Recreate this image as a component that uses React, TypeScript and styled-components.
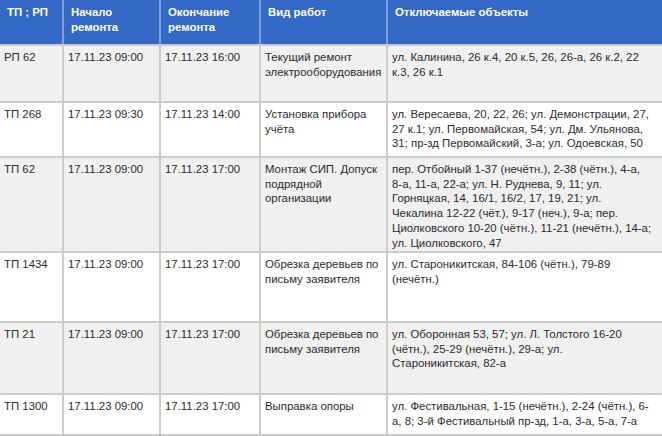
import React from 'react';
import styled, {createGlobalStyle} from "styled-components";

type RowType = {
    tp: string
    start: string
    end: string
    work: string
    objects: string
    height: number
}

const rows: RowType[] = [
    {tp: 'РП 62', start: '17.11.23 09:00', end: '17.11.23 16:00', work: 'Текущий ремонт электрооборудования', objects: 'ул. Калинина, 26 к.4, 20 к.5, 26, 26-а, 26 к.2, 22 к.3, 26 к.1', height: 57},
    {tp: 'ТП 268', start: '17.11.23 09:30', end: '17.11.23 14:00', work: 'Установка прибора учёта', objects: 'ул. Вересаева, 20, 22, 26; ул. Демонстрации, 27, 27 к.1; ул. Первомайская, 54; ул. Дм. Ульянова, 31; пр-зд Первомайский, 3-а; ул. Одоевская, 50', height: 55},
    {tp: 'ТП 62', start: '17.11.23 09:00', end: '17.11.23 17:00', work: 'Монтаж СИП. Допуск подрядной организации', objects: 'пер. Отбойный 1-37 (нечётн.), 2-38 (чётн.), 4-а, 8-а, 11-а, 22-а; ул. Н. Руднева, 9, 11; ул. Горняцкая, 14, 16/1, 16/2, 17, 19, 21; ул. Чекалина 12-22 (чёт.), 9-17 (неч.), 9-а; пер. Циолковского 10-20 (чётн.), 11-21 (нечётн.), 14-а; ул. Циолковского, 47', height: 95},
    {tp: 'ТП 1434', start: '17.11.23 09:00', end: '17.11.23 17:00', work: 'Обрезка деревьев по письму заявителя', objects: 'ул. Староникитская, 84-106 (чётн.), 79-89 (нечётн.)', height: 70},
    {tp: 'ТП 21', start: '17.11.23 09:00', end: '17.11.23 17:00', work: 'Обрезка деревьев по письму заявителя', objects: 'ул. Оборонная 53, 57; ул. Л. Толстого 16-20 (чётн.), 25-29 (нечётн.), 29-а; ул. Староникитская, 82-а', height: 72},
    {tp: 'ТП 1300', start: '17.11.23 09:00', end: '17.11.23 17:00', work: 'Выправка опоры', objects: 'ул. Фестивальная, 1-15 (нечётн.), 2-24 (чётн.), 6-а, 8; 3-й Фестивальный пр-зд, 1-а, 3-а, 5-а, 7-а', height: 41},
]

const App = () => {
    return (
        <>
            <GlobalStyle/>
            <Table>
                <colgroup>
                    <col style={{width: 63}}/>
                    <col style={{width: 97}}/>
                    <col style={{width: 100}}/>
                    <col style={{width: 127}}/>
                    <col style={{width: 275}}/>
                </colgroup>
                <thead>
                <HeadRow>
                    <Th>ТП ; РП</Th>
                    <Th>Начало ремонта</Th>
                    <Th>Окончание ремонта</Th>
                    <Th>Вид работ</Th>
                    <Th>Отключаемые объекты</Th>
                </HeadRow>
                </thead>
                <tbody>
                {rows.map((r, i) => (
                    <Row key={i} $odd={i % 2 === 0} $height={r.height}>
                        <Td>{r.tp}</Td>
                        <Td>{r.start}</Td>
                        <Td>{r.end}</Td>
                        <Td>{r.work}</Td>
                        <Td>{r.objects}</Td>
                    </Row>
                ))}
                </tbody>
            </Table>
        </>
    )
};

export default App;

const GlobalStyle = createGlobalStyle`
  body {
    margin: 0;
    background: #fff;
    font-family: "Liberation Sans", Arial, sans-serif;
  }
`

const Table = styled.table`
  width: 662px;
  table-layout: fixed;
  border-collapse: collapse;
  font-size: 11.4px;
  line-height: 14.7px;
  color: #2b2b2b;
`

const HeadRow = styled.tr`
  height: 45px;
  background-color: #3468c6;
`

const Th = styled.th`
  padding: 5px 7px 0 7px;
  vertical-align: top;
  text-align: left;
  color: #fff;
  font-weight: bold;
  border: 2px solid #c9c9c9;
  border-top: none;
  border-left: 2px solid #7f9fd9;
  border-right: 2px solid #7f9fd9;
  &:first-child {
    border-left: none;
  }
  &:last-child {
    border-right: none;
  }
`

const Row = styled.tr<{ $odd: boolean, $height: number }>`
  height: ${props => props.$height}px;
  background-color: ${props => props.$odd ? '#f0f0f0' : '#ffffff'};
`

const Td = styled.td`
  padding: 4px 3px 0 4px;
  vertical-align: top;
  border: 2px solid #cccccc;
  &:first-child {
    border-left: none;
  }
  &:last-child {
    border-right: none;
    padding-right: 9px;
  }
`
